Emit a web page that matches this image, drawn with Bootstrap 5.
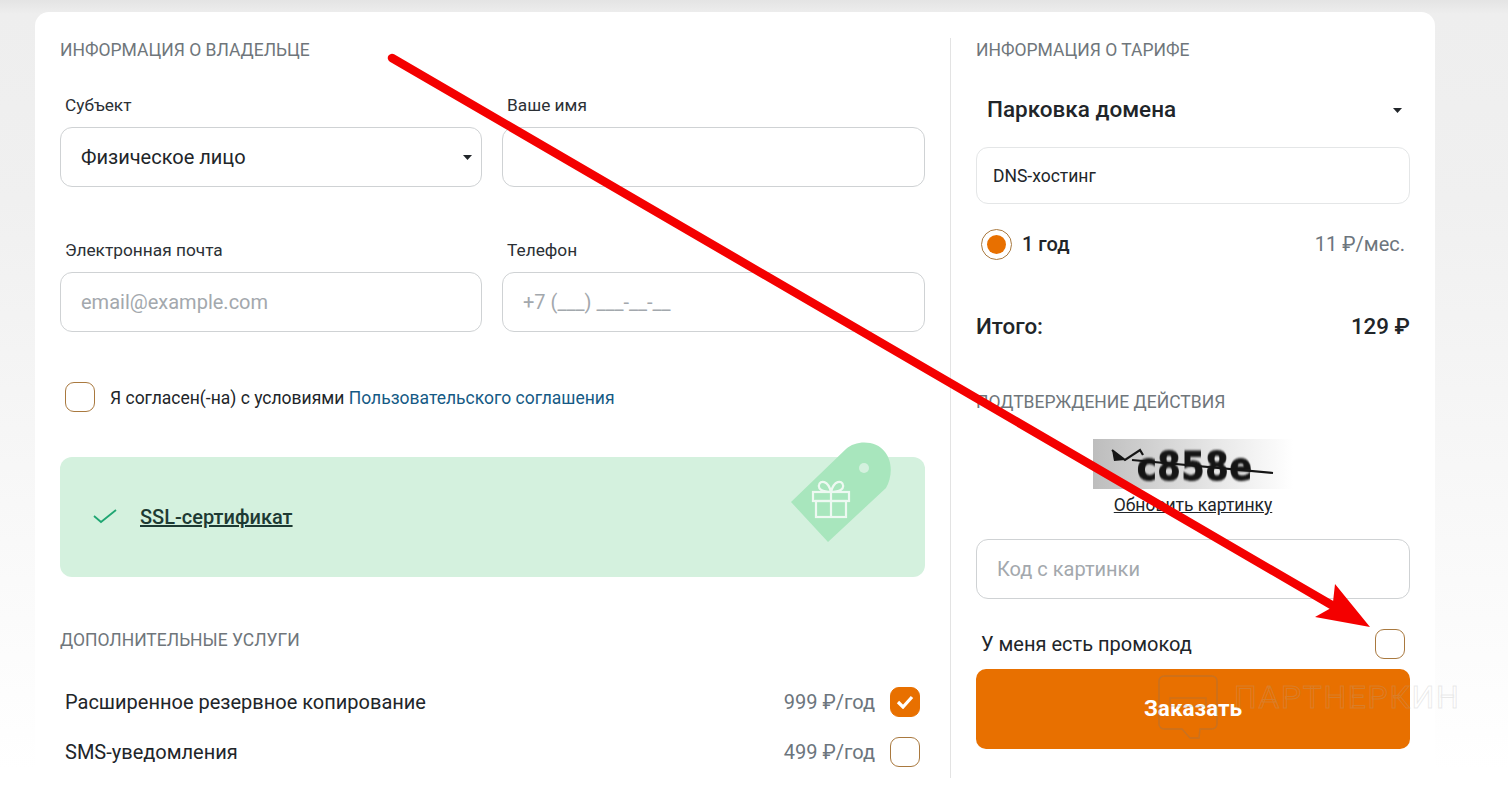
<!DOCTYPE html>
<html lang="ru">
<head>
  <meta charset="UTF-8">
  <title>Заказ тарифа</title>
  <meta name="viewport" content="width=device-width, initial-scale=1" />
  <link href="https://cdn.jsdelivr.net/npm/bootstrap@5.3.2/dist/css/bootstrap.min.css" rel="stylesheet">
  <style>
    html, body { height: 790px; overflow: hidden; }
    body {
      position: relative;
      font-family: Roboto, "Liberation Sans", sans-serif;
      color: #212529;
      background: linear-gradient(#e4e4e4 0, #eeeeee 14px, #f0f0f0 200px, #ffffff 770px);
      padding: 12px 0 0 35px;
    }
    .order-card { width: 1400px; height: 790px; background: #fff; border-radius: 14px 14px 0 0; padding: 26px 25px 0; }
    .owner-col { width: 891px; height: 740px; padding-right: 25px; border-right: 1px solid #e3e3e3; }
    .tariff-col { width: 459px; padding-left: 25px; }
    .sect-title { font-size: 17.5px; line-height: 24px; color: #6f767b; text-transform: uppercase; margin: 0; }
    .field-label { font-size: 17.3px; line-height: 24px; padding-left: 5px; margin-bottom: 10px; color: #2b3035; }
    .field-row { grid-template-columns: 422px 423px; column-gap: 20px; }
    .big-input.form-control, .big-input.form-select {
      height: 60px;
      border-radius: 12px;
      border-color: #cfd2d4;
      padding: 0 20px;
      font-size: 20px;
      color: #212529;
    }
    .big-input::placeholder { color: #a3a8ad; opacity: 1; }
    .big-input.form-select, .plain-select {
      background-image: url("data:image/svg+xml,%3Csvg xmlns='http://www.w3.org/2000/svg' width='9' height='5'%3E%3Cpath d='M0 0h9L4.5 5z' fill='%23212529'/%3E%3C/svg%3E");
      background-repeat: no-repeat;
      background-position: right 9px center;
      background-size: 9px 5px;
    }
    .tick-box {
      flex: none;
      width: 30px;
      height: 30px;
      border: 1px solid #a9793f;
      border-radius: 9px;
      background: #fff;
    }
    .tick-box.is-on { background: #e87000; border-color: #e87000; display: flex; align-items: center; justify-content: center; }
    .agree-text { font-size: 17.5px; }
    .agree-text span { padding-top: 2px; }
    .agree-text a { color: #155a85; text-decoration: none; }
    .ssl-box { position: relative; height: 120px; background: #d4f1de; border-radius: 12px; padding: 0 33px 0 33px; }
    .ssl-box a { color: #1d3a33; font-size: 20px; font-weight: 500; margin-left: -1px; }
    .ssl-tag { position: absolute; left: 728px; top: -15px; }
    .extra-row { font-size: 20px; height: 30px; padding-left: 5px; padding-right: 5px; }
    .extra-price { color: #6c757d; }
    .extra-row .extra-price { margin-right: 15px; }
    .plain-select { height: 48px; margin-top: 24px; padding-left: 11px; padding-bottom: 2px; line-height: 46px; background-position: right 8px center; font-size: 22.5px; font-weight: 500; }
    .dns-box { height: 57px; margin-top: 13px; padding-top: 2px; border: 1px solid #e4e6e7; border-radius: 12px; padding-left: 16px; font-size: 17.5px; }
    .period-row { height: 31px; margin-top: 25px; padding: 0 5px; font-size: 20px; }
    .period-row > span { margin-top: -2px; }
    .radio-ring { width: 31px; height: 31px; border: 1px solid #a9793f; border-radius: 50%; display: flex; align-items: center; justify-content: center; }
    .radio-ring span { display: block; width: 19px; height: 19px; background: #e87000; border-radius: 50%; }
    .period-name { font-weight: 500; margin-left: 10px; }
    .total-row { height: 32px; margin-top: 50px; font-size: 22.4px; font-weight: 500; line-height: 32px; }
    .captcha-pic {
      position: relative;
      width: 200px;
      height: 50px;
      margin: 25px auto 0;
      overflow: hidden;
      background: linear-gradient(90deg, #bdbdbd, #e6e6e6 60%, #ffffff);
      padding-left: 44px;
      font-family: "DejaVu Sans", sans-serif;
      font-weight: 700;
      font-size: 33px;
      line-height: 50px;
      letter-spacing: 1px;
      color: #151515;
    }
    .captcha-word { display: inline-block; transform: translateY(3px) scaleY(1.18); filter: blur(.7px); -webkit-text-stroke: 1px #151515; }
    .captcha-pic svg { position: absolute; left: 0; top: 0; }
    .captcha-link { display: block; margin-top: 4px; line-height: 24px; text-align: center; font-size: 17.5px; color: #212529; }
    .promo-row { height: 30px; margin-top: 30px; padding: 0 5px; font-size: 20px; }
    .order-btn.btn {
      display: block;
      width: 100%;
      height: 80px;
      margin-top: 10px;
      background: #e87000;
      border: 0;
      border-radius: 10px;
      color: #fff;
      font-size: 22.5px;
      font-weight: 700;
    }
    .mark-layer { position: absolute; left: 0; top: 0; pointer-events: none; }
    .wm-text { position: absolute; left: 1234px; top: 677px; font-size: 32px; letter-spacing: 1.6px; line-height: 40px; color: transparent; -webkit-text-stroke: 1px rgba(170,170,170,.25); }
  </style>
</head>
<body>
  <div class="order-card d-flex">
    <div class="owner-col">
      <h2 class="sect-title fw-normal">Информация о владельце</h2>

      <div class="d-grid field-row" style="margin-top: 31px">
        <div>
          <label class="field-label d-block">Субъект</label>
          <select class="form-select big-input"><option>Физическое лицо</option></select>
        </div>
        <div>
          <label class="field-label d-block">Ваше имя</label>
          <input type="text" class="form-control big-input">
        </div>
      </div>

      <div class="d-grid field-row" style="margin-top: 51px">
        <div>
          <label class="field-label d-block">Электронная почта</label>
          <input type="text" class="form-control big-input" placeholder="email@example.com">
        </div>
        <div>
          <label class="field-label d-block">Телефон</label>
          <input type="text" class="form-control big-input" placeholder="+7 (___) ___-__-__">
        </div>
      </div>

      <div class="d-flex align-items-center agree-text" style="margin: 50px 0 45px 5px">
        <div class="tick-box" style="margin-right: 15px"></div>
        <span>Я согласен(-на) с условиями <a href="#">Пользовательского соглашения</a></span>
      </div>

      <div class="ssl-box d-flex align-items-center">
        <svg width="24" height="16" viewBox="0 0 24 16" class="me-4" fill="none" style="margin-top: -2px"><path d="M1 8l7 6L23 2" stroke="#1fa672" stroke-width="1.8"/></svg>
        <a href="#">SSL-сертификат</a>
        <svg class="ssl-tag" width="104" height="104" viewBox="0 0 104 104">
          <path d="M3 60 58 7C68-2 88-2 97 10c8 10 7 26 1 36L40 100z" fill="#a8e6bd"/>
          <circle cx="76" cy="26" r="5" fill="#d4f1de"/>
          <g fill="none" stroke="#eef9f2" stroke-width="2.2">
            <rect x="25" y="50" width="36" height="9"/>
            <rect x="28" y="59" width="30" height="16"/>
            <path d="M43 50v25M43 50c-9 0-13-3-12-7 1-5 9-5 12 7zM43 50c9 0 13-3 12-7-1-5-9-5-12 7z"/>
          </g>
        </svg>
      </div>

      <h2 class="sect-title fw-normal" style="margin: 51px 0 35px">Дополнительные услуги</h2>

      <div class="extra-row d-flex align-items-center" style="margin-bottom: 20px">
        <span class="flex-grow-1">Расширенное резервное копирование</span>
        <span class="extra-price">999 ₽/год</span>
        <div class="tick-box is-on">
          <svg width="18" height="14" viewBox="0 0 18 14" fill="none"><path d="M2 7l5 5 9-10" stroke="#fff" stroke-width="3.2"/></svg>
        </div>
      </div>
      <div class="extra-row d-flex align-items-center">
        <span class="flex-grow-1">SMS-уведомления</span>
        <span class="extra-price">499 ₽/год</span>
        <div class="tick-box"></div>
      </div>
    </div>

    <div class="tariff-col">
      <h2 class="sect-title fw-normal">Информация о тарифе</h2>
      <div class="plain-select">Парковка домена</div>
      <div class="dns-box d-flex align-items-center">DNS-хостинг</div>
      <div class="period-row d-flex align-items-center">
        <div class="radio-ring"><span></span></div>
        <span class="period-name flex-grow-1">1 год</span>
        <span class="extra-price">11 ₽/мес.</span>
      </div>
      <div class="total-row d-flex justify-content-between"><span>Итого:</span><span>129 ₽</span></div>

      <h2 class="sect-title fw-normal" style="margin-top: 48px">Подтверждение действия</h2>
      <div class="captcha-pic"><span class="captcha-word">c858e</span>
        <svg width="200" height="50" fill="none"><path d="M19 11l13 10 15-10 3 5M39 21l141 13" stroke="#151515" stroke-width="2.2"/><path d="M19 11l13 10-11 1z" fill="#151515"/></svg>
      </div>
      <a href="#" class="captcha-link">Обновить картинку</a>
      <input type="text" class="form-control big-input" style="margin-top: 22px" placeholder="Код с картинки">
      <div class="promo-row d-flex align-items-center justify-content-between">
        <span>У меня есть промокод</span>
        <div class="tick-box"></div>
      </div>
      <button type="button" class="btn order-btn">Заказать</button>
    </div>
  </div>

  <!-- watermark and red arrow lie over the page -->
  <span class="wm-text">ПАРТНЕРКИН</span>
  <svg class="mark-layer" width="1508" height="790" fill="none">
    <path d="M1164 676h48a5 5 0 0 1 5 5v43a5 5 0 0 1-5 5h-12l-1 9-9 0-8-9h-18a5 5 0 0 1-5-5v-43a5 5 0 0 1 5-5z" stroke="rgba(120,120,120,.28)" stroke-width="1.5"/>
    <path d="M1170 698h36v8h-36z" stroke="rgba(120,120,120,.22)" stroke-width="1.5"/>
    <path d="M392 58 1335 607" stroke="#f40000" stroke-width="8.5" stroke-linecap="round"/>
    <path d="M1370 627 1335 584 1333 602 1331 608 1315 617z" fill="#f40000"/>
  </svg>

  <script src="https://cdn.jsdelivr.net/npm/bootstrap@5.3.2/dist/js/bootstrap.bundle.min.js"></script>
</body>
</html>
